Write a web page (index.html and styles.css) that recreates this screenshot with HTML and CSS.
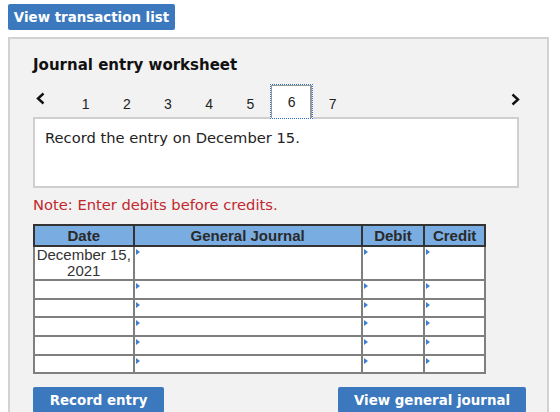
FILE: index.html
```html
<!DOCTYPE html>
<html>
<head>
  <title>Journal entry worksheet</title>
  <link rel="stylesheet" href="styles.css">
</head>
<body>
  <button class="btn btn-top">View transaction list</button>
  <div class="panel">
    <h3 class="panel-title">Journal entry worksheet</h3>
    <div class="steps">
      <span class="arrow">
        <svg width="9" height="13" viewBox="0 0 9 13"><polyline points="7.5,1.5 2,6.5 7.5,11.5" fill="none" stroke="#111" stroke-width="2.4"/></svg>
      </span>
      <span class="step">1</span>
      <span class="step">2</span>
      <span class="step">3</span>
      <span class="step">4</span>
      <span class="step">5</span>
      <span class="step active">6</span>
      <span class="step">7</span>
      <span class="arrow arrow-next">
        <svg width="9" height="13" viewBox="0 0 9 13"><polyline points="1.5,1.5 7,6.5 1.5,11.5" fill="none" stroke="#111" stroke-width="2.4"/></svg>
      </span>
    </div>
    <div class="prompt">Record the entry on December 15.</div>
    <p class="note">Note: Enter debits before credits.</p>
    <table class="journal">
      <thead>
        <tr>
          <th class="col-date">Date</th>
          <th class="col-account">General Journal</th>
          <th class="col-debit">Debit</th>
          <th class="col-credit">Credit</th>
        </tr>
      </thead>
      <tbody>
        <tr class="first">
          <td class="date">December 15,<br>2021</td>
          <td class="cell"></td>
          <td class="cell"></td>
          <td class="cell"></td>
        </tr>
        <tr><td></td><td class="cell"></td><td class="cell"></td><td class="cell"></td></tr>
        <tr><td></td><td class="cell"></td><td class="cell"></td><td class="cell"></td></tr>
        <tr><td></td><td class="cell"></td><td class="cell"></td><td class="cell"></td></tr>
        <tr><td></td><td class="cell"></td><td class="cell"></td><td class="cell"></td></tr>
        <tr><td></td><td class="cell"></td><td class="cell"></td><td class="cell"></td></tr>
      </tbody>
    </table>
    <div class="actions">
      <button class="btn btn-record">Record entry</button>
      <button class="btn btn-view">View general journal</button>
    </div>
  </div>
</body>
</html>
```

FILE: styles.css
```css
body {
  margin: 0;
  background: #fff;
  font-family: 'DejaVu Sans', Verdana, sans-serif;
  color: #222;
}
.btn {
  display: block;
  border: none;
  border-radius: 2px;
  background: #3b78bd;
  color: #fff;
  font-family: 'DejaVu Sans', Verdana, sans-serif;
  font-weight: bold;
  font-size: 13.4px;
  white-space: nowrap;
  height: 26px;
  padding: 0 4px;
  cursor: pointer;
}
.btn-top {
  margin: 4px 0 0 8px;
  width: 167px;
}
.panel {
  margin: 7px 0 0 8px;
  width: 514px;
  height: 400px;
  padding: 17px 0 0 23px;
  background: #f2f2f2;
  border: 2px solid #d2d2d2;
}
.panel-title {
  margin: 0;
  font-size: 15px;
  font-weight: bold;
  color: #111;
  line-height: 18px;
}
.steps {
  display: flex;
  align-items: center;
  margin: 10px 0 -2px 0;
  height: 35px;
  width: 486px;
  font-family: 'Liberation Sans', Arial, sans-serif;
  font-size: 14px;
  color: #222;
}
.arrow {
  display: flex;
  width: 29px;
  padding: 0 0 7px 3px;
}
.arrow-next {
  margin-left: auto;
  width: 9px;
  padding: 0 0 5px 0;
  margin-right: -1px;
}
.step {
  width: 41.2px;
  text-align: center;
  padding-top: 4px;
}
.active {
  position: relative;
  z-index: 1;
  box-sizing: border-box;
  height: 35px;
  width: 43px;
  margin: 0 -0.9px;
  padding-top: 9px;
  background: #fff;
  border: 1px dotted #2f6fc4;
  box-shadow: inset 1px 0 0 #999, inset -2px 0 0 #999, inset 0 1px 0 #999;
}
.prompt {
  box-sizing: border-box;
  width: 486px;
  height: 71px;
  padding: 10px 10px;
  background: #fff;
  border: 2px solid #cfcfcf;
  font-size: 14.7px;
  color: #222;
}
.note {
  margin: 8px 0 0 0;
  font-size: 14.7px;
  line-height: 17px;
  color: #c1272d;
}
.journal {
  margin-top: 11px;
  width: 453px;
  border-collapse: collapse;
  font-family: 'Liberation Sans', Arial, sans-serif;
  font-size: 15px;
  background: #fff;
}
.journal th {
  height: 19px;
  padding: 0;
  background: #79ade2;
  color: #2a2a2a;
  border: 2px solid #333;
  line-height: 17px;
}
.journal td {
  height: 16.7px;
  padding: 0;
  border: 2px solid #7f7f7f;
}
.col-date { width: 98px; }
.col-account { width: 229px; }
.col-debit { width: 61px; }
.col-credit { width: 59px; }
.journal .first td {
  height: 32px;
}
.date {
  text-align: center;
  line-height: 16px;
  color: #333;
}
.cell {
  position: relative;
}
.cell::before {
  content: "";
  position: absolute;
  top: 2px;
  left: 1px;
  border-left: 4px solid #3f7fcf;
  border-top: 3px solid transparent;
  border-bottom: 3px solid transparent;
}
.journal td.cell {
  vertical-align: top;
}
.actions {
  display: flex;
  margin-top: 13px;
}
.btn-record {
  width: 131px;
}
.btn-view {
  width: 188px;
  margin-left: 174px;
}
```
